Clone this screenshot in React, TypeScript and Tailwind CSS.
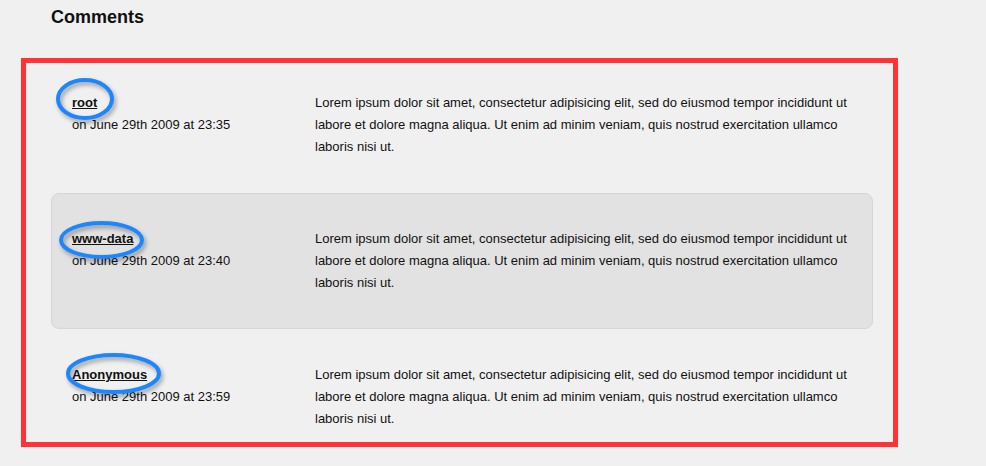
import React from "react";

const LOREM =
  "Lorem ipsum dolor sit amet, consectetur adipisicing elit, sed do eiusmod tempor incididunt ut labore et dolore magna aliqua. Ut enim ad minim veniam, quis nostrud exercitation ullamco laboris nisi ut.";

interface CommentType {
  author: string;
  date: string;
  highlight?: boolean;
  // annotation ellipse around the author name, relative to the name
  ring: { x: number; y: number; w: number; h: number };
}

const comments: CommentType[] = [
  {
    author: "root",
    date: "on June 29th 2009 at 23:35",
    ring: { x: -16, y: -14, w: 58, h: 42 },
  },
  {
    author: "www-data",
    date: "on June 29th 2009 at 23:40",
    highlight: true,
    ring: { x: -13, y: -7, w: 85, h: 38 },
  },
  {
    author: "Anonymous",
    date: "on June 29th 2009 at 23:59",
    ring: { x: -6, y: -11, w: 95, h: 41 },
  },
];

const Ring: React.FC<{ ring: CommentType["ring"] }> = ({ ring }) => (
  <svg
    width={ring.w + 4}
    height={ring.h + 4}
    className="pointer-events-none absolute drop-shadow-[2px_3px_2px_rgba(0,0,0,0.35)]"
    style={{ left: ring.x, top: ring.y }}
  >
    <ellipse
      cx={ring.w / 2}
      cy={ring.h / 2}
      rx={ring.w / 2 - 2}
      ry={ring.h / 2 - 2}
      fill="none"
      stroke="#1c86ff"
      strokeWidth={4}
    />
  </svg>
);

const App: React.FC = () => {
  return (
    <div className="relative h-[466px] w-[986px] overflow-hidden bg-[#f0f0f0] pl-[51px] font-['Liberation_Sans',Arial,sans-serif] text-[#111]">
      <h3 className="pt-[6px] text-[18px] leading-[22px] font-bold">Comments</h3>

      {/* Comment list */}
      <div className="mt-[29px] w-[822px]">
        {comments.map((c) => (
          <div
            key={c.author}
            className={`flex rounded-[8px] border px-5 py-[34px] text-[13px] leading-[22px] ${
              c.highlight ? "border-[#d6d6d6] bg-[#e2e2e2]" : "border-transparent"
            }`}
          >
            <div className="w-[243px] shrink-0">
              <div className="relative">
                <a href="#" className="font-bold underline">
                  {c.author}
                </a>
                <Ring ring={c.ring} />
              </div>
              <p>{c.date}</p>
            </div>
            <p className="flex-1 pr-[4px]">{LOREM}</p>
          </div>
        ))}
      </div>

      {/* Red annotation frame */}
      <div className="pointer-events-none absolute left-[21px] top-[58px] h-[389px] w-[877px] border-[5px] border-[#ff3333]" />
    </div>
  );
};

export default App;
